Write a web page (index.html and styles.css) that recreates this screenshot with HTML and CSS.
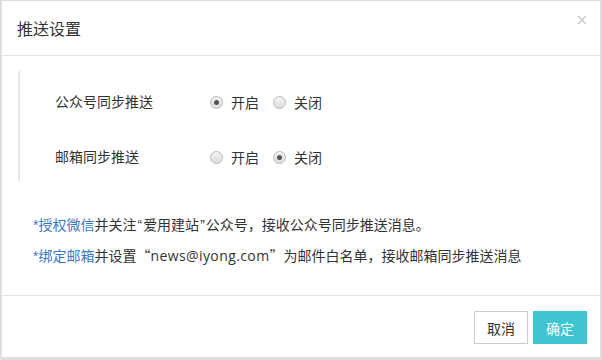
FILE: index.html
```html
<!DOCTYPE html>
<html lang="zh">
<head>
<meta charset="utf-8">
<title>推送设置</title>
<link rel="stylesheet" href="styles.css">
</head>
<body>
<div class="dialog">
  <div class="dialog-header">
    <span class="dialog-title">推送设置</span>
    <svg class="dialog-close" width="10" height="10" viewBox="0 0 10 10" aria-label="关闭">
      <path d="M1 1 L9 9 M9 1 L1 9" stroke="#c6c6c6" stroke-width="1.2" fill="none"/>
    </svg>
  </div>
  <div class="dialog-body">
    <div class="settings">
      <div class="setting-row">
        <span class="setting-label">公众号同步推送</span>
        <label class="radio"><span class="radio-dot checked"></span>开启</label>
        <label class="radio"><span class="radio-dot"></span>关闭</label>
      </div>
      <div class="setting-row">
        <span class="setting-label">邮箱同步推送</span>
        <label class="radio"><span class="radio-dot"></span>开启</label>
        <label class="radio"><span class="radio-dot checked"></span>关闭</label>
      </div>
    </div>
    <div class="notes">
      <p class="note"><span class="link">*授权微信</span>并关注<span class="q-narrow">“</span>爱用建站<span class="q-narrow">”</span>公众号，接收公众号同步推送消息。</p>
      <p class="note"><span class="link">*绑定邮箱</span>并设置<span class="q-wide">“</span><span class="email">news@iyong.com</span><span class="q-wide">”</span>为邮件白名单，接收邮箱同步推送消息</p>
    </div>
  </div>
  <div class="dialog-footer">
    <button class="btn btn-default">取消</button>
    <button class="btn btn-primary">确定</button>
  </div>
</div>
</body>
</html>
```

FILE: styles.css
```css
html, body {
  margin: 0;
  padding: 0;
  background: #dedede;
}
body {
  font-family: "Liberation Sans", "Noto Sans CJK SC", sans-serif;
  color: #333;
  font-size: 14px;
}
.dialog {
  margin: 1px 2px 3px 2px;
  width: 598px;
  height: 356px;
  background: #fff;
  display: flex;
  flex-direction: column;
}
.dialog-header {
  height: 54px;
  border-bottom: 1px solid #e5e5e5;
  display: flex;
  align-items: center;
  justify-content: space-between;
  padding: 0 13px 0 15px;
}
.dialog-title {
  font-size: 16px;
  color: #333;
  margin-top: -1px;
}
.dialog-close {
  display: block;
  margin-top: -16px;
}
.dialog-body {
  flex: 1;
  padding: 15px 0 0 16px;
}
.settings {
  border-left: 2px solid #e4e8ee;
  padding: 21px 0 14px 35px;
  display: flex;
  flex-direction: column;
  gap: 35px;
}
.setting-row {
  display: flex;
  align-items: center;
  height: 20px;
}
.setting-label {
  width: 155px;
  margin-top: -2px;
}
.radio {
  display: flex;
  align-items: center;
  margin-right: 14px;
}
.radio-dot {
  width: 11px;
  height: 11px;
  border: 1px solid #b9b9b9;
  border-radius: 50%;
  background: linear-gradient(#f4f4f4, #dcdcdc);
  margin-right: 8px;
  display: flex;
  align-items: center;
  justify-content: center;
}
.radio-dot.checked::after {
  content: "";
  width: 5px;
  height: 5px;
  border-radius: 50%;
  background: #555;
}
.notes {
  margin-top: 29px;
  padding-left: 15px;
}
.note {
  margin: 0;
  line-height: 30px;
}
.link {
  color: #3a78c3;
}
.q-narrow {
  padding: 0 1px;
}
.q-wide {
  font-family: "Noto Sans CJK SC", sans-serif;
}
.email {
  font-family: "Open Sans", "Liberation Sans", sans-serif;
  letter-spacing: 0.4px;
}
.dialog-footer {
  border-top: 1px solid #e5e5e5;
  height: 62px;
  display: flex;
  justify-content: flex-end;
  align-items: flex-start;
  gap: 5px;
  padding: 15px 13px 0 0;
  box-sizing: border-box;
}
.btn {
  width: 54px;
  height: 33px;
  font-family: inherit;
  font-size: 14px;
  padding: 0;
  cursor: pointer;
}
.btn-default {
  background: #fff;
  border: 1px solid #cccccc;
  color: #333;
}
.btn-primary {
  background: #3ec5d1;
  border: 1px solid #3ec5d1;
  color: #fff;
}
```
